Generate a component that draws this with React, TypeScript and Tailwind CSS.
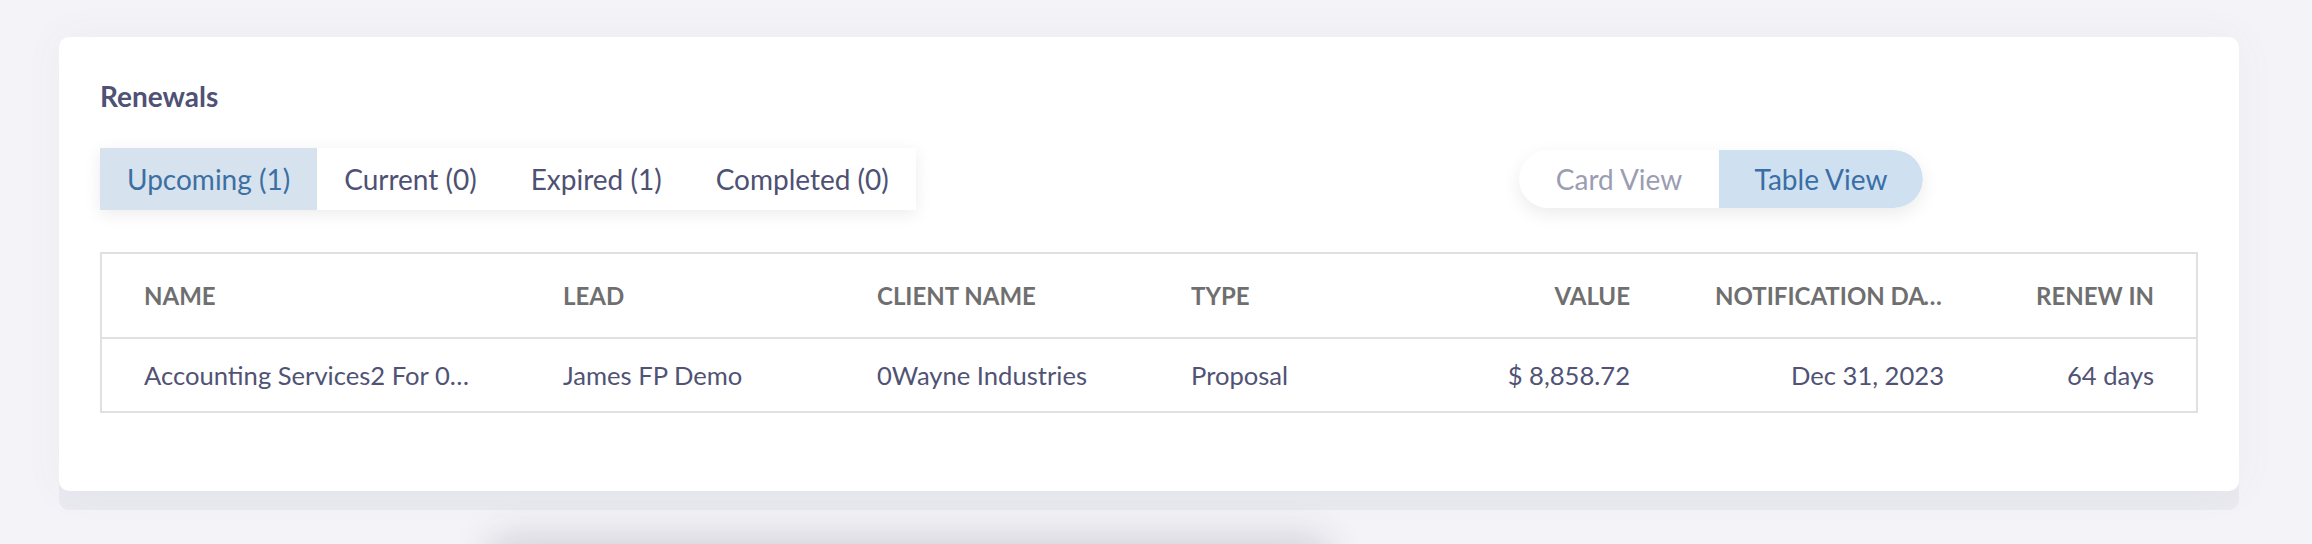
import { ReactNode } from 'react'

const tabs = [
  { label: 'Upcoming (1)', active: true },
  { label: 'Current (0)', active: false },
  { label: 'Expired (1)', active: false },
  { label: 'Completed (0)', active: false },
]

const cols = 'grid grid-cols-[419px_314px_314px_200px_239px_314px_1fr] items-center px-[42px]'

function Cell({ children, right, className = '' }: { children: ReactNode; right?: boolean; className?: string }) {
  return <div className={`truncate ${right ? 'text-right' : ''} ${className}`}>{children}</div>
}

export default function App() {
  return (
    <div className="min-h-screen bg-[#f4f4f8] pt-[37px] pl-[59px] font-['Lato','Noto_Sans',sans-serif] overflow-hidden">
      <div className="w-[2180px] bg-white rounded-[10px] shadow-[0_0_40px_rgba(60,60,100,0.05),0_19px_0_rgba(60,60,100,0.05)] pt-[44px] pb-[78px] px-[41px]">
        <div className="text-[28px] leading-[30px] font-bold text-[#4f5175]">Renewals</div>

        <div className="mt-[37px] flex items-center">
          <div className="flex h-[62px] bg-white shadow-[0_4px_16px_rgba(0,0,0,0.08)]">
            {tabs.map((t) => (
              <div
                key={t.label}
                className={`flex items-center px-[27px] text-[28px] ${
                  t.active ? 'bg-[#d6e3ee] text-[#3d6fa3]' : 'text-[#4e5174]'
                }`}
              >
                {t.label}
              </div>
            ))}
          </div>

          <div className="ml-auto mr-[275px] flex h-[58px] rounded-full bg-white shadow-[0_6px_18px_rgba(0,0,0,0.08)] overflow-hidden text-[28px]">
            <div className="w-[200px] flex items-center justify-center text-[#9b9db2]">Card View</div>
            <div className="w-[204px] flex items-center justify-center bg-[#cfe1f0] text-[#3a6ea6] rounded-r-full">Table View</div>
          </div>
        </div>

        <div className="mt-[42px] border-2 border-[#e0e0e0]">
          <div className={`${cols} h-[85px] text-[24px] font-bold text-[#6f6f6f] border-b-2 border-[#e0e0e0]`}>
            <Cell>NAME</Cell>
            <Cell>LEAD</Cell>
            <Cell>CLIENT NAME</Cell>
            <Cell>TYPE</Cell>
            <Cell right>VALUE</Cell>
            <Cell right className="pl-[85px]">NOTIFICATION DATE</Cell>
            <Cell right>RENEW IN</Cell>
          </div>
          <div className={`${cols} h-[72px] text-[25.6px] text-[#505375]`}>
            <Cell className="pr-[86px]">Accounting Services2 For 0Wayne Industries</Cell>
            <Cell>James FP Demo</Cell>
            <Cell>0Wayne Industries</Cell>
            <Cell>Proposal</Cell>
            <Cell right>$ 8,858.72</Cell>
            <Cell right>Dec 31, 2023</Cell>
            <Cell right>64 days</Cell>
          </div>
        </div>
      </div>

      <div className="ml-[440px] mt-[56px] w-[820px] h-[40px] rounded-[10px] shadow-[0_0_36px_12px_rgba(40,40,60,0.16)]" />
    </div>
  )
}
